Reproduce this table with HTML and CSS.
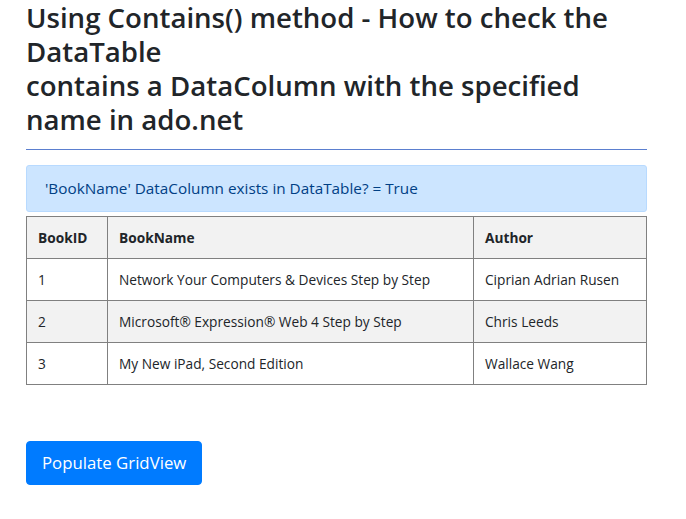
FILE: index.html
```html
<!DOCTYPE html>
<html>
<head>
<meta charset="utf-8">
<link rel="stylesheet" href="styles.css">
</head>
<body>
<div class="container">
  <h2 class="title">Using Contains() method - How to check the DataTable<br>contains a DataColumn with the specified name in ado.net</h2>
  <hr class="rule">
  <div class="alert">'BookName' DataColumn exists in DataTable? = True</div>
  <table class="grid">
    <tr class="head">
      <th class="c1">BookID</th>
      <th class="c2">BookName</th>
      <th class="c3">Author</th>
    </tr>
    <tr>
      <td>1</td>
      <td>Network Your Computers &amp; Devices Step by Step</td>
      <td>Ciprian Adrian Rusen</td>
    </tr>
    <tr class="alt">
      <td>2</td>
      <td>Microsoft® Expression® Web 4 Step by Step</td>
      <td>Chris Leeds</td>
    </tr>
    <tr>
      <td>3</td>
      <td>My New iPad, Second Edition</td>
      <td>Wallace Wang</td>
    </tr>
  </table>
  <button class="btn">Populate GridView</button>
</div>
</body>
</html>
```
FILE: styles.css
```css
html, body {
  margin: 0;
  padding: 0;
  background: #fff;
}
body {
  font-family: "Segoe UI", "Open Sans", sans-serif;
  font-size: 14px;
  line-height: 1.5;
  color: #212529;
}
.container {
  width: 621px;
  margin-left: 26px;
}
.title {
  margin: 0;
  font-size: 27.6px;
  font-weight: 600;
  line-height: 34px;
  color: #212529;
}
.rule {
  margin: 13px 0 15px;
  border: 0;
  border-top: 1px solid #5b7fcf;
  height: 0;
}
.alert {
  background: #cce5ff;
  border: 1px solid #b8daff;
  border-radius: 3px;
  color: #004085;
  font-size: 15.3px;
  padding: 12px 17px 12px 18px;
  line-height: 21px;
  margin-bottom: 4px;
}
.grid {
  width: 100%;
  border-collapse: collapse;
  border: 1px solid #808080;
  font-size: 13.7px;
}
.grid th, .grid td {
  border: 1px solid #808080;
  padding: 10px 11px;
  line-height: 21px;
  text-align: left;
  vertical-align: top;
}
.grid th {
  font-weight: 700;
}
.head, .alt {
  background: #f2f2f2;
}
.c1 { width: 58px; }
.c3 { width: 150px; }
.btn {
  display: block;
  margin-top: 56px;
  background: #007bff;
  border: 1px solid #007bff;
  border-radius: 4px;
  color: #fff;
  font-family: inherit;
  font-size: 16.8px;
  line-height: 26px;
  padding: 8px 15px;
}
```
